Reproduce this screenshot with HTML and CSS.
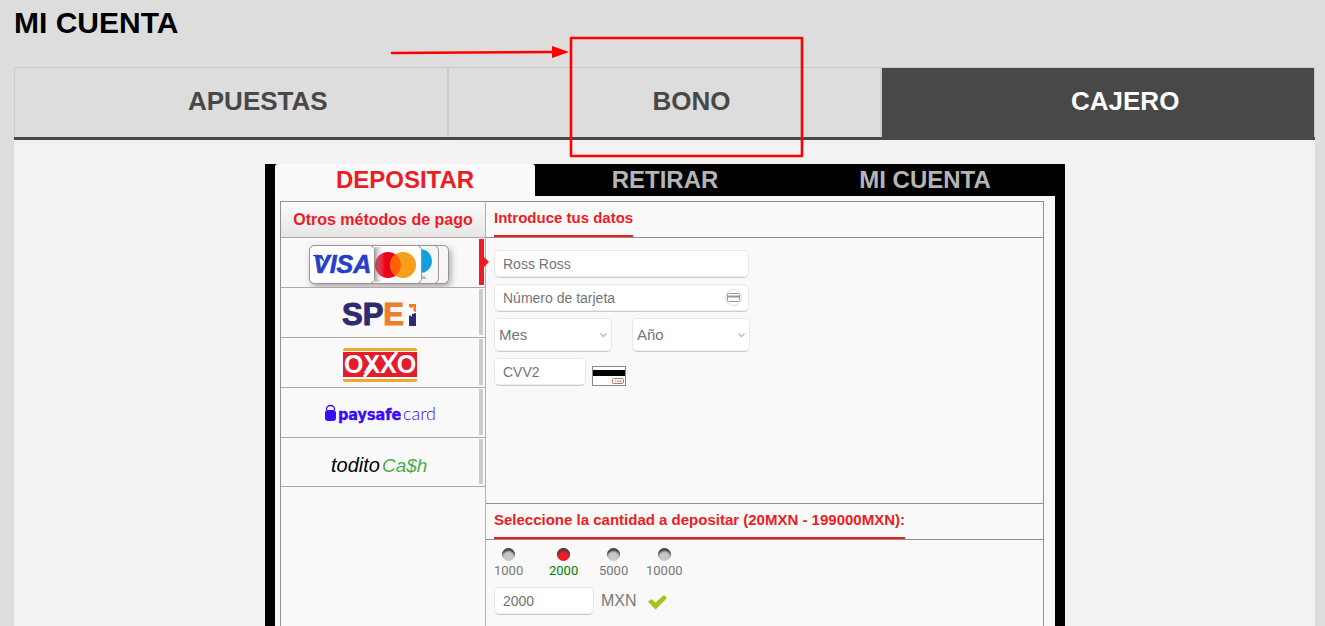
FILE: index.html
```html
<!DOCTYPE html>
<html lang="es">
<head>
<meta charset="utf-8">
<title>Mi cuenta</title>
<link rel="stylesheet" href="styles.css">
</head>
<body>
<h1 class="page-title">MI CUENTA</h1>
<nav class="tabs">
  <button class="tab" type="button">APUESTAS</button>
  <button class="tab" type="button">BONO</button>
  <button class="tab tab-active" type="button">CAJERO</button>
</nav>
<main class="content">
  <section class="cashier">
    <nav class="cashier-tabs">
      <button class="cashier-tab cashier-tab-active" type="button">DEPOSITAR</button>
      <button class="cashier-tab" type="button">RETIRAR</button>
      <button class="cashier-tab" type="button">MI CUENTA</button>
    </nav>
    <div class="cashier-body">
      <div class="panel">
        <aside class="methods">
          <h2 class="methods-title">Otros métodos de pago</h2>
          <button class="method method-active" type="button" aria-label="Tarjeta">
            <svg class="logo" width="200" height="49" viewBox="0 0 200 49">
              <defs>
                <filter id="soft" x="-20%" y="-20%" width="150%" height="160%"><feDropShadow dx="2" dy="3" stdDeviation="3" flood-color="#555" flood-opacity=".5"/></filter>
                <linearGradient id="edge"><stop offset="0" stop-color="#777" stop-opacity=".6"/><stop offset="1" stop-color="#fff" stop-opacity="0"/></linearGradient>
              </defs>
              <g fill="#f6f6f6" stroke="#9d9191" filter="url(#soft)">
                <rect x="28.500" y="7.500" width="139" height="38" rx="5"/>
                <rect x="90.500" y="7.500" width="67" height="38" rx="5"/>
              </g>
              <circle cx="139" cy="23" r="12" fill="#139fdc"/>
              <text x="141" y="41" font-size="6" fill="#555">o.</text>
              <rect x="75.500" y="7.500" width="65" height="38" rx="5" fill="#fff" stroke="#9d9191"/>
              <circle cx="107" cy="27" r="13" fill="#eb001b"/>
              <circle cx="122" cy="27" r="13" fill="#f79e1b"/>
              <path d="M114.500 16.400a13 13 0 0 1 0 21.200a13 13 0 0 1 0-21.200z" fill="#ff5f00"/>
              <rect x="94" y="9" width="10" height="35" fill="url(#edge)"/>
              <rect x="28.500" y="7.500" width="65" height="38" rx="5" fill="#fff" stroke="#9d9191"/>
              <text x="32" y="35" font-size="25" font-weight="bold" font-style="italic" fill="#273fc4" stroke="#273fc4" stroke-width=".6">VISA</text>
              <path d="M32 17h9l3 8c-3-4-7-7-12-7z" fill="#273fc4"/>
            </svg>
          </button>
          <button class="method" type="button" aria-label="SPEI">
            <svg class="logo" width="200" height="49" viewBox="0 0 200 49">
              <text x="61" y="37" font-size="31" font-weight="bold" fill="#2e2a70" stroke="#2e2a70">SP<tspan fill="#ec7f27" stroke="#ec7f27">E</tspan></text>
              <path d="M128 16h7v8h-7z" fill="#ec7f27"/>
              <path d="M128 25h7v13h-7z" fill="#2e2a70"/>
              <path d="M127 18l3 2 3-1-1 3 3 3-4 1 0 3-2-2-3 4z" fill="#fff"/>
            </svg>
          </button>
          <button class="method" type="button" aria-label="OXXO">
            <svg class="logo" width="200" height="49" viewBox="0 0 200 49">
              <rect x="62" y="10" width="74" height="34" rx="2" fill="#f0a82e"/>
              <path d="M62 13h74v28H62z" fill="#fff"/>
              <path d="M62 14h74v25H62z" fill="#e51c2e"/>
              <path d="M107 26L116 14M83 39L92 28" stroke="#fff" stroke-width="3"/>
              <text x="63" y="35" font-size="25" font-weight="bold" fill="#fff">OXXO</text>
            </svg>
          </button>
          <button class="method" type="button" aria-label="paysafecard">
            <svg class="logo" width="200" height="49" viewBox="0 0 200 49">
              <rect x="44" y="22" width="11" height="11" rx="3" fill="#3a0cfa"/>
              <path d="M45.500 22v-1a4 3.500 0 0 1 8 0v1" fill="none" stroke="#3a0cfa" stroke-width="1.300"/>
              <text class="psc" x="57" y="32" font-size="16" font-weight="bold" fill="#3a0cfa" stroke="#3a0cfa" stroke-width=".4">paysafe</text>
              <text class="psc-light" x="122" y="32" font-size="18" font-weight="300" fill="#3a0cfa">card</text>
            </svg>
          </button>
          <button class="method method-last" type="button" aria-label="toditoCash">
            <svg class="logo" width="200" height="48" viewBox="0 0 200 48">
              <text x="50" y="34" font-size="20" font-style="italic" fill="#000">todito</text>
              <text x="101" y="34" font-size="19" font-style="italic" fill="#4eab4e">Ca$h</text>
            </svg>
          </button>
        </aside>
        <form class="details">
          <header class="section-head"><h2 class="section-title">Introduce tus datos</h2></header>
          <div class="card-fields">
            <input class="field" type="text" aria-label="Titular" placeholder="Ross Ross">
            <div class="with-icon">
              <input class="field" type="text" aria-label="Número de tarjeta" placeholder="Número de tarjeta">
              <svg class="field-icon" width="17" height="17" viewBox="0 0 17 17"><circle cx="8.500" cy="8.500" r="8" fill="#fff" stroke="#ddd"/><rect x="2.500" y="4.500" width="12" height="8" rx="1" fill="none" stroke="#999"/><path d="M3 7.500h11" stroke="#999" stroke-width="2"/></svg>
            </div>
            <div class="dates">
              <div class="with-icon">
                <select class="field select" aria-label="Mes"><option>Mes</option></select>
                <svg class="chevron" width="7" height="5" viewBox="0 0 7 5"><path d="M.5.5l3 3 3-3" fill="none" stroke="#bbb" stroke-width="1.300"/></svg>
              </div>
              <div class="with-icon">
                <select class="field select" aria-label="Año"><option>Año</option></select>
                <svg class="chevron" width="7" height="5" viewBox="0 0 7 5"><path d="M.5.5l3 3 3-3" fill="none" stroke="#bbb" stroke-width="1.300"/></svg>
              </div>
            </div>
            <div class="cvv">
              <input class="field cvv-input" type="text" aria-label="CVV2" placeholder="CVV2">
              <svg class="cvv-card" width="34" height="20" viewBox="0 0 34 20"><rect x=".5" y=".5" width="33" height="19" fill="#fff" stroke="#888"/><path d="M1 4h32v6H1z" fill="#000"/><rect x="20.500" y="12.500" width="11" height="5" rx="1" fill="#fff" stroke="#bf7b68"/><path d="M23.500 13.500v3M25 14.500h2v1.500h-2zM28 14.500h1.500v1.500H28z" fill="none" stroke="#aaa" stroke-width=".7"/></svg>
            </div>
          </div>
          <header class="section-head section-head-next"><h2 class="section-title">Seleccione la cantidad a depositar (20MXN - 199000MXN):</h2></header>
          <div class="amounts">
            <div class="choices">
              <label class="choice"><input class="radio" type="radio" name="amount">1000</label>
              <label class="choice choice-on"><input class="radio" type="radio" name="amount" checked>2000</label>
              <label class="choice"><input class="radio" type="radio" name="amount">5000</label>
              <label class="choice"><input class="radio" type="radio" name="amount">10000</label>
            </div>
            <div class="amount-row">
              <input class="field amount-input" id="amount" type="text" value="2000">
              <label class="currency" for="amount">MXN</label>
              <svg class="tick" width="20" height="18" viewBox="0 0 20 18"><path d="M0 9.500l3.500-2.500 4 3.500L16 3l3 3L7.500 17.500z" fill="#a6c31a"/></svg>
            </div>
          </div>
        </form>
      </div>
    </div>
  </section>
</main>
<svg class="annotation" width="420" height="126" viewBox="0 0 420 126" aria-hidden="true">
  <g fill="none" stroke="#fe0000" stroke-width="2.600" stroke-linejoin="round" stroke-linecap="round"><path d="M7 21L167 20"/><rect x="186" y="6" width="231" height="118"/></g>
  <path d="M167 14l17 6-17 6z" fill="#fe0000"/>
</svg>
</body>
</html>
```
FILE: styles.css
```css
* { box-sizing: border-box; }
body {
  position: relative;
  display: flex;
  flex-direction: column;
  min-height: 100vh;
  margin: 0;
  padding: 0 10px 0 14px;
  background: #ddd;
  font-family: "Liberation Sans", Arial, sans-serif;
}
h1, h2 { margin: 0; }
button, input, select { font-family: inherit; }
button { border: 0; padding: 0; background: none; }
.page-title {
  height: 67px;
  padding-top: 6px;
  font-size: 30px;
  line-height: 34px;
}
.tabs {
  display: flex;
  height: 73px;
  border-bottom: 3px solid #484848;
}
.tab {
  flex: 1;
  border: 1px solid #ccc;
  border-bottom: 0;
  padding: 0 0 2px 54px;
  color: #484848;
  font-size: 26px;
  font-weight: bold;
}
.tab-active { background: #484848; color: #fff; }
.content {
  display: flex;
  flex: 1;
  justify-content: center;
  padding: 24px 0 0 1px;
  background: #f3f1f2;
}
.cashier {
  display: flex;
  flex: 0 1 800px;
  flex-direction: column;
  padding: 0 10px;
  background: #000;
}
.cashier-tabs { display: flex; height: 32px; }
.cashier-tab {
  flex: 1;
  color: #b5b5b5;
  font-size: 24px;
  font-weight: bold;
}
.cashier-tab-active {
  border-radius: 3px 3px 0 0;
  background: #fafafa;
  color: #ed1c24;
}
.cashier-body {
  display: flex;
  flex: 1;
  padding: 5px 11px 0 5px;
  background: #f9f9f9;
}
.panel {
  display: flex;
  flex: 1;
  border: 1px solid #909090;
  border-bottom: 0;
}
.methods {
  display: flex;
  flex: 0 0 205px;
  flex-direction: column;
  border-right: 1px solid #b5adad;
}
.methods-title {
  height: 36px;
  border-bottom: 1px solid #b5a5a5;
  background: linear-gradient(#fafafa, #e6e6e6);
  color: #ed1c24;
  font-size: 16px;
  line-height: 35px;
  text-align: center;
}
.method {
  position: relative;
  display: flex;
  height: 50px;
  border-bottom: 1px solid #b5a5a5;
}
.method-last { height: 49px; }
.method::after {
  content: "";
  position: absolute;
  top: 1px;
  right: 2px;
  bottom: 2px;
  width: 4px;
  background: #ccc;
}
.method-active::after {
  right: 1px;
  width: 5px;
  background: #ed1c24;
}
.method-active::before {
  content: "";
  position: absolute;
  top: 19px;
  right: -4px;
  border: 5px solid transparent;
  border-right: 0;
  border-left-color: #ed1c24;
}
.logo { font-family: "Liberation Sans", Arial, sans-serif; }
.psc { font-family: "DejaVu Sans Condensed", "DejaVu Sans", sans-serif; }
.psc-light { font-family: Lato, sans-serif; }
.details { flex: 1; }
.section-head {
  height: 36px;
  padding-left: 8px;
  border-bottom: 1px solid #909090;
}
.section-head-next {
  height: 37px;
  border-top: 1px solid #909090;
}
.section-title {
  display: inline-block;
  height: 35px;
  border-bottom: 2px solid #ed1c24;
  color: #ed1c24;
  font-size: 15px;
  line-height: 32px;
}
.card-fields {
  display: flex;
  flex-direction: column;
  gap: 6px;
  width: 264px;
  height: 265px;
  padding: 12px 0 0 8px;
}
.field {
  width: 255px;
  height: 28px;
  border: 1px solid #e8e8e8;
  border-bottom-color: #ccc;
  border-radius: 5px;
  padding: 0 8px;
  background: #fff;
  box-shadow: inset 0 -1px #eee;
  color: #757575;
  font-size: 14px;
}
.with-icon { position: relative; display: flex; }
.field-icon { position: absolute; top: 5px; right: 8px; }
.dates { display: flex; gap: 20px; }
.select {
  width: 118px;
  height: 34px;
  padding: 0 4px 2px;
  appearance: none;
  font-size: 15px;
}
.chevron { position: absolute; top: 15px; right: 5px; }
.cvv { display: flex; align-items: flex-end; gap: 6px; }
.cvv-input { width: 92px; }
.amounts { padding: 8px 8px 0; }
.choices {
  display: grid;
  grid-template-columns: 55px 50px 47px auto;
  justify-items: start;
}
.choice {
  display: flex;
  flex-direction: column;
  align-items: center;
  gap: 2px;
  color: #777;
  font: 13px/16px Roboto, sans-serif;
}
.choice-on { color: #008000; }
.radio {
  width: 13px;
  height: 13px;
  margin: 0;
  border-radius: 50%;
  appearance: none;
  background: #c8c8c8;
  box-shadow: inset 0 3px 2px #484040;
}
.radio:checked { background: #ed1c24; }
.amount-row { display: flex; align-items: center; padding-top: 8px; }
.amount-input { width: 100px; }
.currency { margin: 0 11px 0 7px; color: #777; font-size: 16px; }
.annotation { position: absolute; top: 32px; left: 385px; pointer-events: none; }
```
